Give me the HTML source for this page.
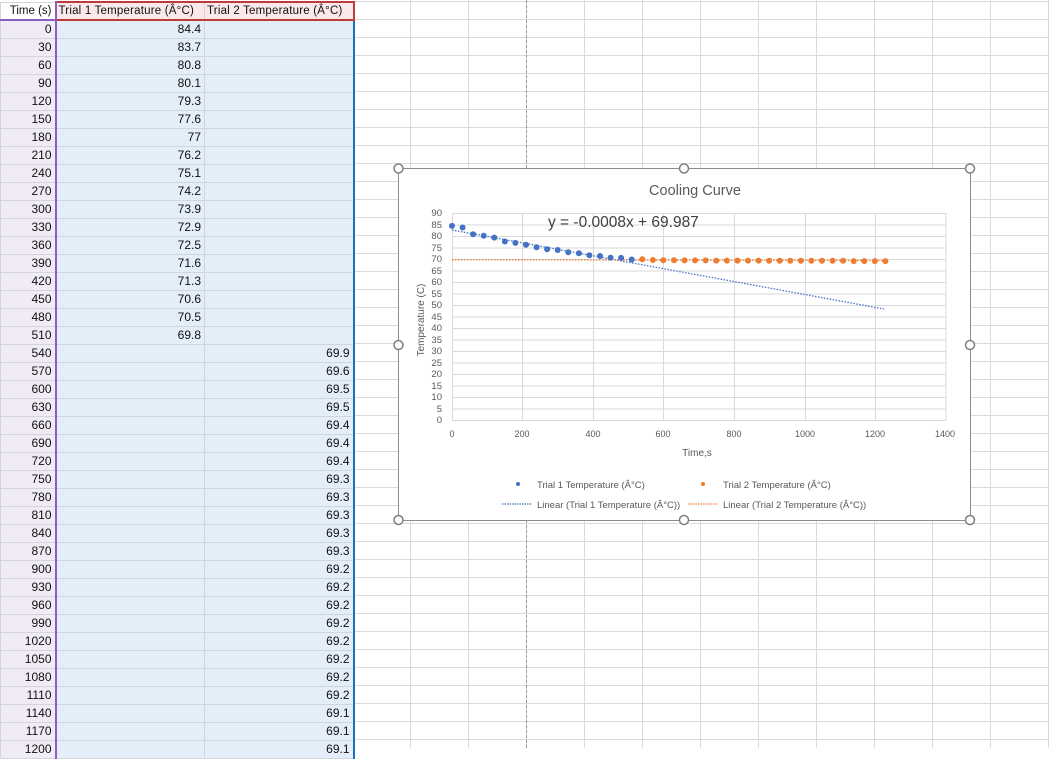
<!DOCTYPE html>
<html><head><meta charset="utf-8"><style>
*{margin:0;padding:0;box-sizing:border-box}
body{width:1049px;height:748px;overflow:hidden;background:#fff;font-family:"Liberation Sans",sans-serif;position:relative}
#grid{position:absolute;left:354px;top:0;width:695px;height:748px;
background-image:linear-gradient(to right,#dadada 1px,transparent 1px),linear-gradient(to bottom,#dadada 1px,transparent 1px);
background-size:58px 18px,58px 18px;background-position:56px 0,0 1px}
#pb{position:absolute;left:526px;top:0;height:748px;border-left:1px dashed #9a9a9a}
table{position:absolute;left:0;top:1px;border-collapse:collapse;table-layout:fixed;font-size:12px;color:#111}
td{height:18px;border:1px solid #cfd6dd;text-align:right;padding:0 3px 0 0;white-space:nowrap;overflow:hidden;line-height:16px}
td.a{width:55px;background:#f1ebf6;border-right:2px solid #8a5fbf}
td.b{width:149px;background:#e3eef8}
td.c{width:149px;background:#e3eef8;border-right:2px solid #1f6fbf}
tr.h td{text-align:left;padding-left:2px;background:#fbe9e9;border-top:2px solid #c0393b;border-bottom:2px solid #c0393b;font-size:11.5px;letter-spacing:0.2px}
tr.h td.a{background:#fff;border-top:1px solid #cfd6dd;border-bottom:2px solid #8a5fbf;text-align:right;letter-spacing:0}
tr.h td.b{border-left:2px solid #c0393b}
tr.h td.c{border-right:2px solid #c0393b}
svg{position:absolute;left:0;top:0}
</style></head><body>
<div id="grid"></div><div id="pb"></div>
<table>
<tr class="h"><td class="a">Time (s)</td><td class="b">Trial 1 Temperature (Â°C)</td><td class="c">Trial 2 Temperature (Â°C)</td></tr>
<tr><td class="a">0</td><td class="b">84.4</td><td class="c"></td></tr>
<tr><td class="a">30</td><td class="b">83.7</td><td class="c"></td></tr>
<tr><td class="a">60</td><td class="b">80.8</td><td class="c"></td></tr>
<tr><td class="a">90</td><td class="b">80.1</td><td class="c"></td></tr>
<tr><td class="a">120</td><td class="b">79.3</td><td class="c"></td></tr>
<tr><td class="a">150</td><td class="b">77.6</td><td class="c"></td></tr>
<tr><td class="a">180</td><td class="b">77</td><td class="c"></td></tr>
<tr><td class="a">210</td><td class="b">76.2</td><td class="c"></td></tr>
<tr><td class="a">240</td><td class="b">75.1</td><td class="c"></td></tr>
<tr><td class="a">270</td><td class="b">74.2</td><td class="c"></td></tr>
<tr><td class="a">300</td><td class="b">73.9</td><td class="c"></td></tr>
<tr><td class="a">330</td><td class="b">72.9</td><td class="c"></td></tr>
<tr><td class="a">360</td><td class="b">72.5</td><td class="c"></td></tr>
<tr><td class="a">390</td><td class="b">71.6</td><td class="c"></td></tr>
<tr><td class="a">420</td><td class="b">71.3</td><td class="c"></td></tr>
<tr><td class="a">450</td><td class="b">70.6</td><td class="c"></td></tr>
<tr><td class="a">480</td><td class="b">70.5</td><td class="c"></td></tr>
<tr><td class="a">510</td><td class="b">69.8</td><td class="c"></td></tr>
<tr><td class="a">540</td><td class="b"></td><td class="c">69.9</td></tr>
<tr><td class="a">570</td><td class="b"></td><td class="c">69.6</td></tr>
<tr><td class="a">600</td><td class="b"></td><td class="c">69.5</td></tr>
<tr><td class="a">630</td><td class="b"></td><td class="c">69.5</td></tr>
<tr><td class="a">660</td><td class="b"></td><td class="c">69.4</td></tr>
<tr><td class="a">690</td><td class="b"></td><td class="c">69.4</td></tr>
<tr><td class="a">720</td><td class="b"></td><td class="c">69.4</td></tr>
<tr><td class="a">750</td><td class="b"></td><td class="c">69.3</td></tr>
<tr><td class="a">780</td><td class="b"></td><td class="c">69.3</td></tr>
<tr><td class="a">810</td><td class="b"></td><td class="c">69.3</td></tr>
<tr><td class="a">840</td><td class="b"></td><td class="c">69.3</td></tr>
<tr><td class="a">870</td><td class="b"></td><td class="c">69.3</td></tr>
<tr><td class="a">900</td><td class="b"></td><td class="c">69.2</td></tr>
<tr><td class="a">930</td><td class="b"></td><td class="c">69.2</td></tr>
<tr><td class="a">960</td><td class="b"></td><td class="c">69.2</td></tr>
<tr><td class="a">990</td><td class="b"></td><td class="c">69.2</td></tr>
<tr><td class="a">1020</td><td class="b"></td><td class="c">69.2</td></tr>
<tr><td class="a">1050</td><td class="b"></td><td class="c">69.2</td></tr>
<tr><td class="a">1080</td><td class="b"></td><td class="c">69.2</td></tr>
<tr><td class="a">1110</td><td class="b"></td><td class="c">69.2</td></tr>
<tr><td class="a">1140</td><td class="b"></td><td class="c">69.1</td></tr>
<tr><td class="a">1170</td><td class="b"></td><td class="c">69.1</td></tr>
<tr><td class="a">1200</td><td class="b"></td><td class="c">69.1</td></tr>
</table>

<svg width="1049" height="748" viewBox="0 0 1049 748" font-family="Liberation Sans, sans-serif">
<rect x="398.5" y="168.5" width="572" height="352" fill="#fff" stroke="#8c8c8c"/>
<g stroke="#d9d9d9" stroke-width="1">
<path d="M452 213.5H946M452 225H946M452 236.5H946M452 248H946M452 259.5H946M452 271H946M452 282.5H946M452 294H946M452 305.5H946M452 317H946M452 328.5H946M452 340H946M452 351.5H946M452 363H946M452 374.5H946M452 386H946M452 397.5H946M452 409H946M452 420.5H946"/>
<path d="M452.5 213V421M522.5 213V421M593.5 213V421M663.5 213V421M734.5 213V421M805.5 213V421M875.5 213V421M946 213V421"/>
</g>
<text x="695" y="195" font-size="14.5" fill="#595959" text-anchor="middle">Cooling Curve</text>
<text x="548" y="227" font-size="15.5" fill="#404040">y = -0.0008x + 69.987</text>
<g font-size="9.5" fill="#595959" text-anchor="end">
<text x="442" y="216">90</text><text x="442" y="228">85</text><text x="442" y="239">80</text><text x="442" y="251">75</text><text x="442" y="262">70</text><text x="442" y="274">65</text><text x="442" y="285">60</text><text x="442" y="297">55</text><text x="442" y="308">50</text><text x="442" y="320">45</text><text x="442" y="331">40</text><text x="442" y="343">35</text><text x="442" y="354">30</text><text x="442" y="366">25</text><text x="442" y="377">20</text><text x="442" y="389">15</text><text x="442" y="400">10</text><text x="442" y="412">5</text><text x="442" y="423">0</text>
</g>
<g font-size="9" fill="#595959" text-anchor="middle">
<text x="452" y="437">0</text><text x="522" y="437">200</text><text x="593" y="437">400</text><text x="663" y="437">600</text><text x="734" y="437">800</text><text x="805" y="437">1000</text><text x="875" y="437">1200</text><text x="945" y="437">1400</text>
</g>
<text x="697" y="456" font-size="10" fill="#595959" text-anchor="middle">Time,s</text>
<text transform="translate(424,320) rotate(-90)" font-size="10" fill="#595959" text-anchor="middle">Temperature (C)</text>
<line x1="452" y1="230" x2="884" y2="309" stroke="#4472c4" stroke-width="1.3" stroke-dasharray="1.5 1.5"/>
<line x1="452" y1="259.7" x2="886" y2="260.5" stroke="#ed7d31" stroke-width="1.3" stroke-dasharray="1.5 1.5"/>
<g fill="#4472c4">
<circle cx="452" cy="225.9" r="3"/><circle cx="462.6" cy="227.5" r="3"/><circle cx="473.1" cy="234.2" r="3"/><circle cx="483.7" cy="235.8" r="3"/><circle cx="494.3" cy="237.6" r="3"/><circle cx="504.9" cy="241.5" r="3"/><circle cx="515.4" cy="242.9" r="3"/><circle cx="526" cy="244.7" r="3"/><circle cx="536.6" cy="247.3" r="3"/><circle cx="547.1" cy="249.3" r="3"/><circle cx="557.7" cy="250" r="3"/><circle cx="568.3" cy="252.3" r="3"/><circle cx="578.9" cy="253.3" r="3"/><circle cx="589.4" cy="255.3" r="3"/><circle cx="600" cy="256" r="3"/><circle cx="610.6" cy="257.6" r="3"/><circle cx="621.1" cy="257.9" r="3"/><circle cx="631.7" cy="259.5" r="3"/>
</g>
<g fill="#ed7d31">
<circle cx="642.3" cy="259.3" r="3"/><circle cx="652.9" cy="260" r="3"/><circle cx="663.4" cy="260.2" r="3"/><circle cx="674" cy="260.2" r="3"/><circle cx="684.6" cy="260.4" r="3"/><circle cx="695.1" cy="260.4" r="3"/><circle cx="705.7" cy="260.4" r="3"/><circle cx="716.3" cy="260.6" r="3"/><circle cx="726.9" cy="260.6" r="3"/><circle cx="737.4" cy="260.6" r="3"/><circle cx="748" cy="260.6" r="3"/><circle cx="758.6" cy="260.6" r="3"/><circle cx="769.1" cy="260.8" r="3"/><circle cx="779.7" cy="260.8" r="3"/><circle cx="790.3" cy="260.8" r="3"/><circle cx="800.9" cy="260.8" r="3"/><circle cx="811.4" cy="260.8" r="3"/><circle cx="822" cy="260.8" r="3"/><circle cx="832.6" cy="260.8" r="3"/><circle cx="843.1" cy="260.8" r="3"/><circle cx="853.7" cy="261.1" r="3"/><circle cx="864.3" cy="261.1" r="3"/><circle cx="874.9" cy="261.1" r="3"/><circle cx="885.4" cy="261.1" r="3"/>
</g>
<g font-size="9.5" fill="#595959">
<circle cx="518" cy="484" r="2" fill="#4472c4"/><text x="537" y="488">Trial 1 Temperature (Â°C)</text>
<circle cx="703" cy="484" r="2" fill="#ed7d31"/><text x="723" y="488">Trial 2 Temperature (Â°C)</text>
<line x1="502" y1="504" x2="532" y2="504" stroke="#4472c4" stroke-width="1.2" stroke-dasharray="1.5 1"/><text x="537" y="508">Linear (Trial 1 Temperature (Â°C))</text>
<line x1="688" y1="504" x2="718" y2="504" stroke="#ed7d31" stroke-width="1.2" stroke-dasharray="1.5 1"/><text x="723" y="508">Linear (Trial 2 Temperature (Â°C))</text>
</g>
<g fill="#fff" stroke="#7f7f7f" stroke-width="1.5">
<circle cx="398.5" cy="168.5" r="4.5"/><circle cx="684" cy="168.5" r="4.5"/><circle cx="970" cy="168.5" r="4.5"/>
<circle cx="398.5" cy="345" r="4.5"/><circle cx="970" cy="345" r="4.5"/>
<circle cx="398.5" cy="520" r="4.5"/><circle cx="684" cy="520" r="4.5"/><circle cx="970" cy="520" r="4.5"/>
</g>
</svg>
</body></html>
